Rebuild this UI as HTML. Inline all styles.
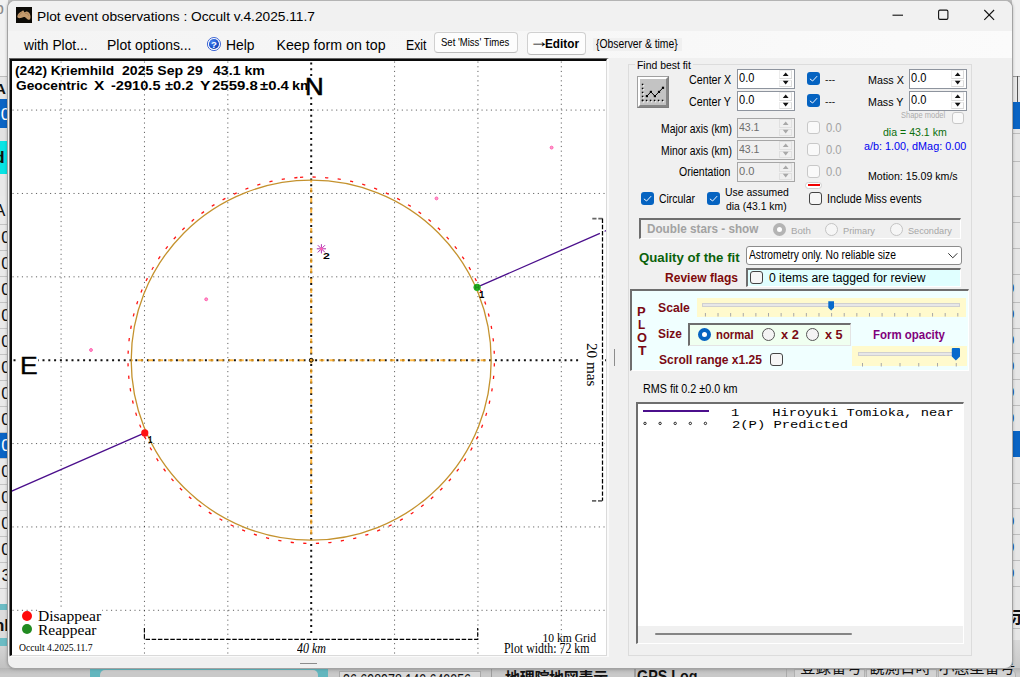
<!DOCTYPE html>
<html lang="en"><head><meta charset="utf-8"><title>Plot event observations : Occult v.4.2025.11.7</title>
<style>
html,body{margin:0;padding:0}
body{width:1020px;height:677px;overflow:hidden;position:relative;background:#c6c6c6;font-family:"Liberation Sans",sans-serif}
div,span,svg{position:absolute;box-sizing:border-box}
.t{white-space:pre;transform-origin:0 0;display:block}
.cb{width:13px;height:13px;border-radius:3px}
.cb.on{background:#0563c1}
.cb.off{background:#f6f6f6;border:1px solid #444}
.cb.dis{background:#f9f9f9;border:1px solid #c8c8c8}
.rb{width:13px;height:13px;border-radius:50%}
.rb.on{border:4px solid #0563c1;background:#fff}
.rb.off{border:1px solid #555;background:#f4f4f4}
.rb.dis{border:1px solid #c4c4c4;background:#f6f6f6}
.rb.dison{border:4px solid #b4b4b4;background:#fff}
.num{background:#fff;border:1px solid #8e949e}
.num.dis{background:#f0f0f0;border-color:#a6a6a6}
.sp{background:#fdfdfd;border:1px solid #dadada;border-top-color:#ececec;border-left-color:#ececec}
.num.dis .sp{background:#f0f0f0;border-color:#e0e0e0}
</style></head><body>

<div id="bgapp" style="left:0;top:0;width:1020px;height:677px;overflow:hidden">
<div style="left:0px;top:0px;width:8px;height:76px;background:#f1f1f1"></div>
<span class="t" style="left:-5.56px;top:-0.80px;font:normal normal 17px/19px 'Liberation Sans',sans-serif;color:#8a8a8a;">b</span>
<div style="left:0px;top:76px;width:8px;height:23px;background:#e6e6e6;border-top:1px solid #bdbdbd"></div>
<span class="t" style="left:-5.38px;top:79.80px;font:normal bold 15.5px/17px 'Liberation Sans',sans-serif;color:#111;">A</span>
<div style="left:0px;top:99px;width:8px;height:29px;background:#0a64c4"></div>
<span class="t" style="left:0.81px;top:105.00px;font:normal normal 17px/19px 'Liberation Sans',sans-serif;color:#fff;">0</span>
<div style="left:0px;top:128px;width:8px;height:13px;background:#e2e2e2"></div>
<div style="left:0px;top:141px;width:8px;height:33px;background:#08e4e4"></div>
<span class="t" style="left:-5.69px;top:148.00px;font:normal bold 17px/19px 'Liberation Sans',sans-serif;color:#111;">d</span>
<div style="left:0px;top:174px;width:8px;height:22px;background:#e8e8e8"></div>
<div style="left:0px;top:196px;width:8px;height:404px;background:#e9e9e9"></div>
<span class="t" style="left:-6.06px;top:201.00px;font:normal normal 17px/19px 'Liberation Sans',sans-serif;color:#111;">A</span>
<div style="left:0px;top:223.6px;width:8px;height:26.0px;border-top:1px solid #c3c3c3"></div>
<span class="t" style="left:1.31px;top:227.60px;font:normal normal 17px/19px 'Liberation Sans',sans-serif;color:#111;">0</span>
<div style="left:0px;top:249.60000000000002px;width:8px;height:26.0px;border-top:1px solid #c3c3c3"></div>
<span class="t" style="left:1.31px;top:253.60px;font:normal normal 17px/19px 'Liberation Sans',sans-serif;color:#111;">0</span>
<div style="left:0px;top:275.6px;width:8px;height:26.0px;border-top:1px solid #c3c3c3"></div>
<span class="t" style="left:1.31px;top:279.60px;font:normal normal 17px/19px 'Liberation Sans',sans-serif;color:#111;">0</span>
<div style="left:0px;top:301.6px;width:8px;height:26.0px;border-top:1px solid #c3c3c3"></div>
<span class="t" style="left:1.31px;top:305.60px;font:normal normal 17px/19px 'Liberation Sans',sans-serif;color:#111;">0</span>
<div style="left:0px;top:327.6px;width:8px;height:26.0px;border-top:1px solid #c3c3c3"></div>
<span class="t" style="left:1.31px;top:331.60px;font:normal normal 17px/19px 'Liberation Sans',sans-serif;color:#111;">0</span>
<div style="left:0px;top:353.6px;width:8px;height:26.0px;border-top:1px solid #c3c3c3"></div>
<span class="t" style="left:1.31px;top:357.60px;font:normal normal 17px/19px 'Liberation Sans',sans-serif;color:#111;">0</span>
<div style="left:0px;top:379.6px;width:8px;height:26.0px;border-top:1px solid #c3c3c3"></div>
<span class="t" style="left:1.31px;top:383.60px;font:normal normal 17px/19px 'Liberation Sans',sans-serif;color:#111;">0</span>
<div style="left:0px;top:405.6px;width:8px;height:26.0px;border-top:1px solid #c3c3c3"></div>
<span class="t" style="left:1.31px;top:409.60px;font:normal normal 17px/19px 'Liberation Sans',sans-serif;color:#111;">0</span>
<div style="left:0px;top:431.6px;width:8px;height:26.0px;background:#0a64c4;border-top:1px solid #c3c3c3"></div>
<span class="t" style="left:1.31px;top:435.60px;font:normal normal 17px/19px 'Liberation Sans',sans-serif;color:#fff;">0</span>
<div style="left:0px;top:457.6px;width:8px;height:26.0px;border-top:1px solid #c3c3c3"></div>
<span class="t" style="left:1.31px;top:461.60px;font:normal normal 17px/19px 'Liberation Sans',sans-serif;color:#111;">0</span>
<div style="left:0px;top:483.6px;width:8px;height:26.0px;border-top:1px solid #c3c3c3"></div>
<span class="t" style="left:1.31px;top:487.60px;font:normal normal 17px/19px 'Liberation Sans',sans-serif;color:#111;">0</span>
<div style="left:0px;top:509.6px;width:8px;height:26.0px;border-top:1px solid #c3c3c3"></div>
<span class="t" style="left:1.31px;top:513.60px;font:normal normal 17px/19px 'Liberation Sans',sans-serif;color:#111;">0</span>
<div style="left:0px;top:535.6px;width:8px;height:26.0px;border-top:1px solid #c3c3c3"></div>
<span class="t" style="left:1.31px;top:539.60px;font:normal normal 17px/19px 'Liberation Sans',sans-serif;color:#111;">0</span>
<div style="left:0px;top:561.6px;width:8px;height:26.0px;border-top:1px solid #c3c3c3"></div>
<span class="t" style="left:1.38px;top:565.60px;font:normal normal 17px/19px 'Liberation Sans',sans-serif;color:#111;">3</span>
<div style="left:0px;top:588px;width:8px;height:16px;background:#e9e9e9;border-top:1px solid #c3c3c3"></div>
<div style="left:0px;top:604px;width:8px;height:42px;background:#6cbcc4"></div>
<div style="left:0px;top:610px;width:8px;height:28px;background:#dcdcdc"></div>
<span class="t" style="left:-6.12px;top:616.00px;font:normal bold 17px/19px 'Liberation Sans',sans-serif;color:#111;">nl</span>
<div style="left:0px;top:646px;width:8px;height:31px;background:linear-gradient(#d4d4d4,#b9b9b9)"></div>
<div style="left:1012px;top:0px;width:8px;height:76px;background:#f1f1f1"></div>
<div style="left:1012px;top:76px;width:8px;height:26px;background:#e9e9e9;border-top:1px solid #9a9a9a"></div>
<div style="left:1017px;top:76px;width:1px;height:26px;background:#555"></div>
<div style="left:1012px;top:102px;width:8px;height:27px;background:#0a64c4"></div>
<div style="left:1012px;top:129px;width:8px;height:511px;background:#e6e6e6"></div>
<div style="left:1012px;top:133px;width:8px;height:1px;background:#bdbdbd"></div>
<div style="left:1012px;top:161px;width:8px;height:1px;background:#bdbdbd"></div>
<div style="left:1012px;top:196px;width:8px;height:1px;background:#bdbdbd"></div>
<div style="left:1012px;top:222px;width:8px;height:1px;background:#bdbdbd"></div>
<div style="left:1012px;top:248px;width:8px;height:1px;background:#bdbdbd"></div>
<div style="left:1012px;top:274px;width:8px;height:1px;background:#bdbdbd"></div>
<div style="left:1012px;top:302px;width:8px;height:1px;background:#bdbdbd"></div>
<div style="left:1012px;top:328px;width:8px;height:1px;background:#bdbdbd"></div>
<div style="left:1012px;top:353px;width:8px;height:1px;background:#bdbdbd"></div>
<div style="left:1012px;top:379px;width:8px;height:1px;background:#bdbdbd"></div>
<div style="left:1012px;top:405px;width:8px;height:1px;background:#bdbdbd"></div>
<div style="left:1012px;top:483px;width:8px;height:1px;background:#bdbdbd"></div>
<div style="left:1012px;top:508px;width:8px;height:1px;background:#bdbdbd"></div>
<div style="left:1012px;top:534px;width:8px;height:1px;background:#bdbdbd"></div>
<div style="left:1012px;top:560px;width:8px;height:1px;background:#bdbdbd"></div>
<div style="left:1012px;top:586px;width:8px;height:1px;background:#bdbdbd"></div>
<div style="left:1012px;top:628px;width:8px;height:1px;background:#bdbdbd"></div>
<div style="left:1012px;top:431px;width:8px;height:26px;background:#0a64c4"></div>
<span class="t" style="left:1005.94px;top:279.00px;font:normal normal 15px/17px 'Liberation Sans',sans-serif;color:#1747b0;">0</span>
<span class="t" style="left:1005.94px;top:305.00px;font:normal normal 15px/17px 'Liberation Sans',sans-serif;color:#1747b0;">0</span>
<span class="t" style="left:1005.94px;top:331.00px;font:normal normal 15px/17px 'Liberation Sans',sans-serif;color:#1747b0;">0</span>
<span class="t" style="left:1005.94px;top:357.00px;font:normal normal 15px/17px 'Liberation Sans',sans-serif;color:#1747b0;">0</span>
<span class="t" style="left:1005.94px;top:383.00px;font:normal normal 15px/17px 'Liberation Sans',sans-serif;color:#1747b0;">0</span>
<span class="t" style="left:1005.94px;top:409.00px;font:normal normal 15px/17px 'Liberation Sans',sans-serif;color:#1747b0;">0</span>
<span class="t" style="left:1005.94px;top:512.00px;font:normal normal 15px/17px 'Liberation Sans',sans-serif;color:#1747b0;">0</span>
<span class="t" style="left:1005.94px;top:538.00px;font:normal normal 15px/17px 'Liberation Sans',sans-serif;color:#1747b0;">0</span>
<span class="t" style="left:1005.94px;top:564.00px;font:normal normal 15px/17px 'Liberation Sans',sans-serif;color:#1747b0;">0</span>
<span class="t" style="left:1010.88px;top:608.50px;font:normal bold 16px/17px 'Liberation Sans',sans-serif;color:#111;font-family:'Liberation Sans','Noto Sans CJK JP',sans-serif;">示</span>
<div style="left:1012px;top:640px;width:8px;height:37px;background:linear-gradient(#d8d8d8,#c4c4c4)"></div>
<div style="left:0px;top:668px;width:1020px;height:9px;background:linear-gradient(#b4b4b4,#c9c9c9 70%)"></div>
<div style="left:90px;top:669px;width:238px;height:8px;background:#62b6be"></div>
<div style="left:100px;top:670px;width:218px;height:20px;background:#c9c9c9;border-radius:5px"></div>
<div style="left:339px;top:671px;width:142px;height:19px;background:#d9d9d9;border:1px solid #a8a8a8"></div>
<span class="t" style="left:342.53px;top:670.60px;font:normal normal 16.5px/18px 'Liberation Sans',sans-serif;color:#111;transform:scaleX(0.7543);">36.698978,140.640056</span>
<div style="left:491px;top:669px;width:1px;height:8px;background:#9c9c9c"></div>
<span class="t" style="left:505px;top:668.5px;font:bold 15px/18px sans-serif;font-family:'Liberation Sans','Noto Sans CJK JP',sans-serif;color:#111;letter-spacing:-.3px">地理院地図表示</span>
<div style="left:634px;top:669px;width:2px;height:8px;background:#9c9c9c"></div>
<span class="t" style="left:637.42px;top:667.30px;font:normal bold 17px/19px 'Liberation Sans',sans-serif;color:#111;transform:scaleX(0.8436);">GPS Log</span>
<div style="left:786px;top:669px;width:1px;height:8px;background:#aaa"></div>
<div style="left:794px;top:669px;width:71px;height:21px;background:#d2d2d2;border:1px solid #b0b0b0"></div>
<div style="left:866px;top:669px;width:71px;height:21px;background:#d2d2d2;border:1px solid #b0b0b0"></div>
<div style="left:938px;top:669px;width:78px;height:21px;background:#d2d2d2;border:1px solid #b0b0b0;border-radius:0 6px 0 0"></div>
<span class="t" style="left:800px;top:658.5px;font:normal 15.5px/18px sans-serif;font-family:'Liberation Sans','Noto Sans CJK JP',sans-serif;color:#111">登録番号</span>
<span class="t" style="left:869px;top:658.5px;font:normal 15.5px/18px sans-serif;font-family:'Liberation Sans','Noto Sans CJK JP',sans-serif;color:#111">観測日時</span>
<span class="t" style="left:939px;top:658.5px;font:normal 15.5px/18px sans-serif;font-family:'Liberation Sans','Noto Sans CJK JP',sans-serif;color:#111;letter-spacing:-.4px">小惑星番号</span>
</div>
<div style="left:7px;top:0px;width:1006px;height:669px;background:#f0f0f0;border:1px solid #a3a3a3;border-top-color:#b4b4b4;border-radius:8px;box-shadow:0 0 3px rgba(0,0,0,.25)"></div>
<div style="left:8px;top:1px;width:1004px;height:29.5px;background:#f1f1f1;border-radius:7px 7px 0 0"></div>
<svg style="left:16px;top:7px" width="16" height="16" viewBox="0 0 16 16"><rect width="16" height="16" fill="#0c0a06"/><path d="M1.3 9.6C1.6 7 3.4 5.4 5 4.8c.9-.4 1.4-1.6 2.2-1.4.8.2.5 1.3 1.2 1.8.8.5 1.5-.7 2.6-.6 1.6.2 2.9 1.7 3.3 3.6.4 1.8.3 3.6-.6 4.3-.9.6-2.100-.3-3.200-1.100-1-.8-1.600-1.400-2.600-1.300-1.200.1-1.800.9-3 1-1.500.2-3.700.2-3.600-1.500z" fill="#c49a6c"/><path d="M3 9c.6-2 2-3 3.400-3.600M9 6.500c1.500-.5 3.200.2 3.800 2.300" stroke="#a67c4f" stroke-width=".8" fill="none"/></svg>
<span class="t" style="left:36.66px;top:8.60px;font:normal normal 13.52px/15px 'Liberation Sans',sans-serif;color:#000;transform:scaleX(1.0153);">Plot event observations : Occult v.4.2025.11.7</span>
<svg style="left:880px;top:1px" width="130" height="29" viewBox="880 1 130 29" fill="none" stroke="#111" stroke-width="1.1"><path d="M892.500 15.200h10.500"/><rect x="938.600" y="10.100" width="9.300" height="9.300" rx="1.300"/><path d="M984.300 10l9.800 9.800M994.100 10l-9.800 9.800"/></svg>
<div style="left:8px;top:30.5px;width:1004px;height:27.0px;background:linear-gradient(90deg,#f4f4f4,#f6f6f6 45%,#fbfbfb)"></div>
<span class="t" style="left:24.30px;top:37.00px;font:normal normal 14.24px/16px 'Liberation Sans',sans-serif;color:#000;transform:scaleX(0.9699);">with Plot...</span>
<span class="t" style="left:107.44px;top:37.00px;font:normal normal 14.24px/16px 'Liberation Sans',sans-serif;color:#000;transform:scaleX(0.9796);">Plot options...</span>
<svg style="left:206px;top:36px" width="16" height="16" viewBox="0 0 16 16"><defs><radialGradient id="hg" cx=".35" cy=".3" r=".85"><stop offset="0" stop-color="#4d86f0"/><stop offset=".55" stop-color="#1c55d0"/><stop offset="1" stop-color="#0f3aa6"/></radialGradient></defs><circle cx="7.950" cy="8.050" r="6.550" fill="#fff" stroke="#3f66d4" stroke-width="1"/><circle cx="7.950" cy="8.050" r="5.050" fill="url(#hg)"/><text x="8" y="11.500" font-family="Liberation Sans,sans-serif" font-weight="bold" font-size="9.500" fill="#fff" text-anchor="middle">?</text></svg>
<span class="t" style="left:225.74px;top:37.00px;font:normal normal 14.24px/16px 'Liberation Sans',sans-serif;color:#000;transform:scaleX(0.9745);">Help</span>
<span class="t" style="left:276.42px;top:37.00px;font:normal normal 14.24px/16px 'Liberation Sans',sans-serif;color:#000;">Keep form on top</span>
<span class="t" style="left:405.77px;top:37.00px;font:normal normal 14.24px/16px 'Liberation Sans',sans-serif;color:#000;transform:scaleX(0.8646);">Exit</span>
<div style="left:434.2px;top:32.4px;width:83.4px;height:20.3px;background:#fdfdfd;border:1px solid #d0d0d0;border-bottom-color:#bcbcbc;border-radius:4px"></div>
<span class="t" style="left:440.78px;top:37.20px;font:normal normal 10.03px/11px 'Liberation Sans',sans-serif;color:#000;transform:scaleX(0.9521);">Set 'Miss' Times</span>
<div style="left:527.3px;top:32.1px;width:58.3px;height:22.5px;background:#fdfdfd;border:1px solid #d0d0d0;border-bottom-color:#bcbcbc;border-radius:4px"></div>
<span class="t" style="left:529.14px;top:31.40px;font:normal bold 18px/20px 'Liberation Sans',sans-serif;color:#000;transform:scaleX(1.1012);">→</span>
<span class="t" style="left:545.12px;top:36.70px;font:normal bold 12.35px/14px 'Liberation Sans',sans-serif;color:#000;transform:scaleX(0.9542);">Editor</span>
<div style="left:593.1px;top:38.1px;width:88.8px;height:12.5px;background:#f0f0f0"></div>
<span class="t" style="left:596.14px;top:37.20px;font:normal normal 12.35px/14px 'Liberation Sans',sans-serif;color:#000;transform:scaleX(0.8386);">{Observer &amp; time}</span>
<div style="left:9px;top:58px;width:600px;height:599px;background:#fff;border-left:1px solid #777;border-top:1px solid #666;border-right:2px solid #fafafa;border-bottom:2px solid #fafafa"></div>
<div style="left:10px;top:59px;width:597px;height:597px;background:#fff;border-left:2px solid #0a0a0a;border-top:2px solid #0a0a0a;border-right:1px solid #dadada;border-bottom:1px solid #dadada"></div>
<svg style="left:12px;top:61px" width="594" height="594" viewBox="12 61 594 594"><path d="M61.09 61.5V655M12.5 110.09H606M144.46 61.5V655M12.5 193.46H606M227.83 61.5V655M12.5 276.83H606M394.57 61.5V655M12.5 443.57H606M477.94 61.5V655M12.5 526.94H606M561.31 61.5V655M12.5 610.31H606" stroke="#000" stroke-opacity=".62" stroke-width="1" stroke-dasharray="1.15 3.54" fill="none"/><path d="M13.5 360.2H606" stroke="#111" stroke-width="2" stroke-dasharray="2 3.8" fill="none"/><path d="M311.2 62.5V633.5" stroke="#111" stroke-width="2" stroke-dasharray="2 3.8" fill="none"/><path d="M131.60 360.2H491.20" stroke="#ffa818" stroke-opacity=".8" stroke-width="2" stroke-dasharray="5 5.08" stroke-dashoffset="3.74" fill="none"/><path d="M311.2 180.60V540.20" stroke="#ffa818" stroke-opacity=".8" stroke-width="2" stroke-dasharray="4.8 5.25" stroke-dashoffset="2.85" fill="none"/><circle cx="311.2" cy="360.2" r="1.9" fill="#f0a020" stroke="#111" stroke-width="1"/><circle cx="311.2" cy="360.2" r="183.2" fill="none" stroke="#ff1414" stroke-width="1.3" stroke-dasharray="3.2 9.38" transform="rotate(-93.5 311.2 360.2)"/><circle cx="311.2" cy="360.2" r="180.0" fill="none" stroke="#c4922e" stroke-width="1.3"/><path d="M10 491.900L144.800 432.900M477.100 287.200L599.900 233.300M604.400 231.300L606.500 230.400" stroke="#4b0f8c" stroke-width="1.3" fill="none"/><circle cx="144.800" cy="432.900" r="3.600" fill="#ff1212"/><circle cx="477.100" cy="287.300" r="3.600" fill="#1fb31f"/><path d="M475.500 285v4.600M478.700 285v4.600M475.500 287.300h3.200" stroke="#1f8a1f" stroke-width="1.200" fill="none"/><circle cx="551.6" cy="147.6" r="1.45" fill="#ff9acb" stroke="#ff58aa" stroke-width=".9"/><circle cx="436.5" cy="198.4" r="1.45" fill="#ff9acb" stroke="#ff58aa" stroke-width=".9"/><circle cx="206.2" cy="299.3" r="1.45" fill="#ff9acb" stroke="#ff58aa" stroke-width=".9"/><circle cx="91" cy="350" r="1.45" fill="#ff9acb" stroke="#ff58aa" stroke-width=".9"/><path d="M316.79999999999995 248.8h9.2M321.4 244.20000000000002v9.2M317.79999999999995 245.20000000000002l7.2 7.2M317.79999999999995 252.4l7.2 -7.2" stroke="#b030b0" stroke-width="1" fill="none"/><circle cx="321.4" cy="248.8" r="1.6" fill="#ff5fb4"/><rect x="600.200" y="217" width="4.200" height="285" fill="#fff"/><rect x="579.500" y="341" width="21" height="48" fill="#fff"/><path d="M602.500 218.600V500.800" stroke="#000" stroke-width="1.25" stroke-dasharray="4.4 1.8" fill="none"/><path d="M592.300 218.600H602.500M592 500.800H602.500" stroke="#000" stroke-opacity=".6" stroke-width="1.7" stroke-dasharray="4.2 1.8" fill="none"/><path d="M144.400 628V639.300H477.700V628" stroke="#000" stroke-width="1.15" stroke-dasharray="4.5 1.7" fill="none"/></svg>
<div style="left:306.5px;top:77px;width:16.0px;height:19px;background:#fff"></div>
<span class="t" style="left:15.30px;top:62.90px;font:normal bold 13.44px/15px 'Liberation Sans',sans-serif;color:#000;transform:scaleX(1.0209);">(242) Kriemhild</span>
<span class="t" style="left:121.74px;top:62.90px;font:normal bold 13.44px/15px 'Liberation Sans',sans-serif;color:#000;transform:scaleX(1.0491);">2025 Sep 29</span>
<span class="t" style="left:213.30px;top:62.90px;font:normal bold 13.44px/15px 'Liberation Sans',sans-serif;color:#000;transform:scaleX(1.0515);">43.1 km</span>
<span class="t" style="left:15.73px;top:78.40px;font:normal bold 13.44px/15px 'Liberation Sans',sans-serif;color:#000;transform:scaleX(1.0195);">Geocentric</span>
<span class="t" style="left:93.86px;top:78.40px;font:normal bold 13.44px/15px 'Liberation Sans',sans-serif;color:#000;transform:scaleX(1.1511);">X</span>
<span class="t" style="left:110.66px;top:78.40px;font:normal bold 13.44px/15px 'Liberation Sans',sans-serif;color:#000;transform:scaleX(1.0860);">-2910.5</span>
<span class="t" style="left:164.66px;top:78.40px;font:normal bold 13.44px/15px 'Liberation Sans',sans-serif;color:#000;transform:scaleX(1.0878);">±0.2</span>
<span class="t" style="left:199.61px;top:78.40px;font:normal bold 13.44px/15px 'Liberation Sans',sans-serif;color:#000;transform:scaleX(1.1647);">Y</span>
<span class="t" style="left:212.11px;top:78.40px;font:normal bold 13.44px/15px 'Liberation Sans',sans-serif;color:#000;transform:scaleX(1.1130);">2559.8</span>
<span class="t" style="left:260.45px;top:78.40px;font:normal bold 13.44px/15px 'Liberation Sans',sans-serif;color:#000;transform:scaleX(1.1056);">±0.4</span>
<span class="t" style="left:291.89px;top:78.40px;font:normal bold 13.44px/15px 'Liberation Sans',sans-serif;color:#000;transform:scaleX(1.0742);">km</span>
<div style="left:307px;top:77px;width:16px;height:19px;background:#fff"></div>
<span class="t" style="left:305.46px;top:72.90px;font:normal normal 24.13px/27px 'Liberation Sans',sans-serif;color:#000;transform:scaleX(1.0716);-webkit-text-stroke:.6px #000;">N</span>
<div style="left:17.5px;top:355px;width:20.5px;height:21px;background:#fff"></div>
<span class="t" style="left:19.56px;top:352.00px;font:normal normal 24.71px/27px 'Liberation Sans',sans-serif;color:#000;transform:scaleX(1.0716);-webkit-text-stroke:.4px #000;">E</span>
<span class="t" style="left:322.61px;top:250.00px;font:normal bold 9.88px/11px 'Liberation Sans',sans-serif;color:#000;transform:scaleX(1.2468);">2</span>
<span class="t" style="left:479.00px;top:288.70px;font:normal bold 10.5px/12px 'Liberation Mono',monospace;color:#000;transform:scaleX(0.8675);">1</span>
<span class="t" style="left:147.81px;top:433.90px;font:normal bold 10.5px/12px 'Liberation Mono',monospace;color:#000;transform:scaleX(0.7133);">1</span>
<div style="left:36.8px;top:609px;width:65.2px;height:44.5px;background:#fff"></div>
<div style="left:17px;top:641px;width:77px;height:12.5px;background:#fff"></div>
<div style="left:21.600px;top:610.500px;width:10.200px;height:10.200px;border-radius:50%;background:#ff0a0a"></div>
<div style="left:21.600px;top:624.300px;width:10.200px;height:10.200px;border-radius:50%;background:#228b22"></div>
<span class="t" style="left:37.94px;top:607.60px;font:normal normal 14.66px/16px 'Liberation Serif',serif;color:#000;transform:scaleX(1.0616);">Disappear</span>
<span class="t" style="left:37.94px;top:621.70px;font:normal normal 14.66px/16px 'Liberation Serif',serif;color:#000;transform:scaleX(1.0557);">Reappear</span>
<span class="t" style="left:18.81px;top:640.80px;font:normal normal 10.69px/12px 'Liberation Serif',serif;color:#000;transform:scaleX(0.9021);">Occult 4.2025.11.7</span>
<span class="t" style="left:542.50px;top:631.80px;font:normal normal 11.6px/13px 'Liberation Serif',serif;color:#000;">10 km Grid</span>
<span class="t" style="left:503.68px;top:640.70px;font:normal normal 13.74px/15px 'Liberation Serif',serif;color:#000;transform:scaleX(0.8656);">Plot width: 72 km</span>
<span class="t" style="left:297.35px;top:640.80px;font:italic normal 13.74px/15px 'Liberation Serif',serif;color:#000;transform:scaleX(0.8722);">40 km</span>
<span class="t" style="left:600.70px;top:343.22px;font:normal normal 15.3px/17px 'Liberation Serif',serif;color:#000;transform:rotate(90deg) scaleX(0.9938)">20 mas</span>
<div style="left:614px;top:348.7px;width:1px;height:17.3px;background:#8c8c8c"></div>
<div style="left:300px;top:663px;width:17px;height:1px;background:#8c8c8c"></div>
<div style="left:628px;top:64px;width:344px;height:592px;border:1px solid #dcdcdc"></div>
<div style="left:635px;top:60px;width:57.5px;height:10px;background:#f0f0f0"></div>
<span class="t" style="left:636.67px;top:57.70px;font:normal normal 11.77px/13px 'Liberation Sans',sans-serif;color:#000;transform:scaleX(0.8844);">Find best fit</span>
<div style="left:637px;top:76px;width:32px;height:32px;background:#c3c3c3;border:1px solid #a0a0a0;border-right-color:#7e7e7e;border-bottom-color:#7e7e7e"></div>
<div style="left:638px;top:77px;width:30px;height:30px;border-top:2px solid #fff;border-left:2px solid #fff;border-right:2px solid #868686;border-bottom:2px solid #868686"></div>
<svg style="left:637px;top:76px" width="32" height="32" viewBox="637 76 32 32"><g fill="#fff"><rect x="642.8" y="84.9" width="1.400" height="1.400"/><rect x="642.8" y="88.9" width="1.400" height="1.400"/><rect x="642.8" y="92.9" width="1.400" height="1.400"/><rect x="642.8" y="96.9" width="1.400" height="1.400"/><rect x="642.8" y="100.9" width="1.400" height="1.400"/><rect x="642.8" y="100.9" width="1.400" height="1.400"/><rect x="646.8" y="100.9" width="1.400" height="1.400"/><rect x="650.8" y="100.9" width="1.400" height="1.400"/><rect x="654.8" y="100.9" width="1.400" height="1.400"/><rect x="658.8" y="100.9" width="1.400" height="1.400"/><rect x="662.8" y="100.9" width="1.400" height="1.400"/></g><g fill="#000"><rect x="641.8" y="83.7" width="1.500" height="1.500"/><rect x="641.8" y="87.7" width="1.500" height="1.500"/><rect x="641.8" y="91.7" width="1.500" height="1.500"/><rect x="641.8" y="95.7" width="1.500" height="1.500"/><rect x="641.8" y="99.7" width="1.500" height="1.500"/><rect x="641.8" y="99.7" width="1.500" height="1.500"/><rect x="645.8" y="99.7" width="1.500" height="1.500"/><rect x="649.8" y="99.7" width="1.500" height="1.500"/><rect x="653.8" y="99.7" width="1.500" height="1.500"/><rect x="657.8" y="99.7" width="1.500" height="1.500"/><rect x="661.8" y="99.7" width="1.500" height="1.500"/></g><path d="M646.900 96.100L650.900 91.900L654.900 96.100L659 91.900L663 87.800" stroke="#000" stroke-width="1" fill="none"/><g fill="#000"><rect x="645.800" y="95" width="2.200" height="2.200"/><rect x="649.800" y="90.800" width="2.200" height="2.200"/><rect x="653.800" y="95" width="2.200" height="2.200"/><rect x="657.900" y="90.800" width="2.200" height="2.200"/><rect x="661.900" y="86.700" width="2.200" height="2.200"/></g></svg>
<span class="t" style="left:688.94px;top:72.80px;font:normal normal 12.06px/14px 'Liberation Sans',sans-serif;color:#000;transform:scaleX(0.8889);">Center X</span>
<span class="t" style="left:688.95px;top:94.60px;font:normal normal 12.06px/14px 'Liberation Sans',sans-serif;color:#000;transform:scaleX(0.8851);">Center Y</span>
<div class="num" style="left:737px;top:69px;width:58px;height:20px"><div class="sp" style="left:41px;top:.4px;width:13.400px;height:8.200px"></div><div class="sp" style="left:41px;top:9.500px;width:13.400px;height:7.600px"></div><svg style="left:41px;top:-1px" width="15" height="19" viewBox="0 0 15 19"><path d="M3.800 7.100L6.700 3.600L9.600 7.100zM3.800 11.800L6.700 15.500L9.600 11.800z" fill="#111"/></svg></div>
<span class="t" style="left:738.86px;top:70.90px;font:normal normal 12.5px/14px 'Liberation Sans',sans-serif;color:#000;transform:scaleX(0.8821);">0.0</span>
<div class="num" style="left:737px;top:91px;width:58px;height:20px"><div class="sp" style="left:41px;top:.4px;width:13.400px;height:8.200px"></div><div class="sp" style="left:41px;top:9.500px;width:13.400px;height:7.600px"></div><svg style="left:41px;top:-1px" width="15" height="19" viewBox="0 0 15 19"><path d="M3.800 7.100L6.700 3.600L9.600 7.100zM3.800 11.800L6.700 15.500L9.600 11.800z" fill="#111"/></svg></div>
<span class="t" style="left:738.86px;top:92.90px;font:normal normal 12.5px/14px 'Liberation Sans',sans-serif;color:#000;transform:scaleX(0.8821);">0.0</span>
<span class="t" style="left:867.64px;top:73.00px;font:normal normal 11.77px/13px 'Liberation Sans',sans-serif;color:#000;transform:scaleX(0.9132);">Mass X</span>
<span class="t" style="left:867.65px;top:94.60px;font:normal normal 11.77px/13px 'Liberation Sans',sans-serif;color:#000;transform:scaleX(0.9071);">Mass Y</span>
<div class="num" style="left:909px;top:69px;width:58px;height:20px"><div class="sp" style="left:41px;top:.4px;width:13.400px;height:8.200px"></div><div class="sp" style="left:41px;top:9.500px;width:13.400px;height:7.600px"></div><svg style="left:41px;top:-1px" width="15" height="19" viewBox="0 0 15 19"><path d="M3.800 7.100L6.700 3.600L9.600 7.100zM3.800 11.800L6.700 15.500L9.600 11.800z" fill="#111"/></svg></div>
<span class="t" style="left:910.86px;top:70.90px;font:normal normal 12.5px/14px 'Liberation Sans',sans-serif;color:#000;transform:scaleX(0.8821);">0.0</span>
<div class="num" style="left:909px;top:91px;width:58px;height:20px"><div class="sp" style="left:41px;top:.4px;width:13.400px;height:8.200px"></div><div class="sp" style="left:41px;top:9.500px;width:13.400px;height:7.600px"></div><svg style="left:41px;top:-1px" width="15" height="19" viewBox="0 0 15 19"><path d="M3.800 7.100L6.700 3.600L9.600 7.100zM3.800 11.800L6.700 15.500L9.600 11.800z" fill="#111"/></svg></div>
<span class="t" style="left:910.86px;top:92.90px;font:normal normal 12.5px/14px 'Liberation Sans',sans-serif;color:#000;transform:scaleX(0.8821);">0.0</span>
<span class="t" style="left:660.64px;top:121.60px;font:normal normal 12.06px/14px 'Liberation Sans',sans-serif;color:#000;transform:scaleX(0.8608);">Major axis (km)</span>
<span class="t" style="left:660.64px;top:143.80px;font:normal normal 12.06px/14px 'Liberation Sans',sans-serif;color:#000;transform:scaleX(0.8608);">Minor axis (km)</span>
<span class="t" style="left:679.33px;top:164.80px;font:normal normal 12.5px/14px 'Liberation Sans',sans-serif;color:#000;transform:scaleX(0.8402);">Orientation</span>
<div class="num dis" style="left:737px;top:118px;width:58px;height:20px"><div class="sp" style="left:41px;top:.4px;width:13.400px;height:8.200px"></div><div class="sp" style="left:41px;top:9.500px;width:13.400px;height:7.600px"></div><svg style="left:41px;top:-1px" width="15" height="19" viewBox="0 0 15 19"><path d="M3.800 7.100L6.700 3.600L9.600 7.100zM3.800 11.800L6.700 15.500L9.600 11.800z" fill="#a8a8a8"/></svg></div>
<span class="t" style="left:738.97px;top:120.70px;font:normal normal 11.48px/12px 'Liberation Sans',sans-serif;color:#6d6d6d;transform:scaleX(0.9163);">43.1</span>
<div class="num dis" style="left:737px;top:140px;width:58px;height:20px"><div class="sp" style="left:41px;top:.4px;width:13.400px;height:8.200px"></div><div class="sp" style="left:41px;top:9.500px;width:13.400px;height:7.600px"></div><svg style="left:41px;top:-1px" width="15" height="19" viewBox="0 0 15 19"><path d="M3.800 7.100L6.700 3.600L9.600 7.100zM3.800 11.800L6.700 15.500L9.600 11.800z" fill="#a8a8a8"/></svg></div>
<span class="t" style="left:738.97px;top:142.70px;font:normal normal 11.48px/12px 'Liberation Sans',sans-serif;color:#6d6d6d;transform:scaleX(0.9163);">43.1</span>
<div class="num dis" style="left:737px;top:162px;width:58px;height:20px"><div class="sp" style="left:41px;top:.4px;width:13.400px;height:8.200px"></div><div class="sp" style="left:41px;top:9.500px;width:13.400px;height:7.600px"></div><svg style="left:41px;top:-1px" width="15" height="19" viewBox="0 0 15 19"><path d="M3.800 7.100L6.700 3.600L9.600 7.100zM3.800 11.800L6.700 15.500L9.600 11.800z" fill="#a8a8a8"/></svg></div>
<span class="t" style="left:738.78px;top:164.70px;font:normal normal 11.48px/12px 'Liberation Sans',sans-serif;color:#6d6d6d;transform:scaleX(0.9693);">0.0</span>
<div class="cb on" style="left:807px;top:72px;width:13px;height:13px"><svg width="13" height="13" viewBox="0 0 13 13" style="left:0;top:0"><path d="M3.200 7.100L5.600 9L9.900 4.400" stroke="#f4f8ff" stroke-width="1" fill="none" stroke-linecap="round" stroke-linejoin="round"/></svg></div>
<div class="cb on" style="left:807px;top:94px;width:13px;height:13px"><svg width="13" height="13" viewBox="0 0 13 13" style="left:0;top:0"><path d="M3.200 7.100L5.600 9L9.900 4.400" stroke="#f4f8ff" stroke-width="1" fill="none" stroke-linecap="round" stroke-linejoin="round"/></svg></div>
<span class="t" style="left:825.36px;top:72.60px;font:normal normal 11.5px/12px 'Liberation Sans',sans-serif;color:#222;transform:scaleX(0.8857);">---</span>
<span class="t" style="left:825.36px;top:94.60px;font:normal normal 11.5px/12px 'Liberation Sans',sans-serif;color:#222;transform:scaleX(0.8857);">---</span>
<div class="cb dis" style="left:807px;top:121.4px;width:13px;height:13px"></div>
<div class="cb dis" style="left:807px;top:143.3px;width:13px;height:13px"></div>
<div class="cb dis" style="left:807px;top:165.2px;width:13px;height:13px"></div>
<span class="t" style="left:825.75px;top:121.00px;font:normal normal 12.35px/14px 'Liberation Sans',sans-serif;color:#a3a3a3;transform:scaleX(0.9081);">0.0</span>
<span class="t" style="left:825.75px;top:143.00px;font:normal normal 12.35px/14px 'Liberation Sans',sans-serif;color:#a3a3a3;transform:scaleX(0.9081);">0.0</span>
<span class="t" style="left:825.75px;top:165.00px;font:normal normal 12.35px/14px 'Liberation Sans',sans-serif;color:#a3a3a3;transform:scaleX(0.9081);">0.0</span>
<span class="t" style="left:901.06px;top:110.80px;font:normal normal 8.28px/10px 'Liberation Sans',sans-serif;color:#adadad;transform:scaleX(0.9065);">Shape model</span>
<div class="cb dis" style="left:952.4px;top:111.8px;width:12px;height:12px"></div>
<span class="t" style="left:882.76px;top:125.70px;font:normal normal 10.61px/12px 'Liberation Sans',sans-serif;color:#0b6e0b;transform:scaleX(0.9956);">dia = 43.1 km</span>
<span class="t" style="left:863.87px;top:139.70px;font:normal normal 10.9px/12px 'Liberation Sans',sans-serif;color:#0000f0;transform:scaleX(0.9929);">a/b: 1.00, dMag: 0.00</span>
<span class="t" style="left:867.74px;top:169.70px;font:normal normal 10.76px/12px 'Liberation Sans',sans-serif;color:#000;transform:scaleX(0.9874);">Motion: 15.09 km/s</span>
<div style="left:804.7px;top:181.6px;width:17.7px;height:7.0px;background:#fff;border:1px solid #cfcfcf;border-radius:3.500px"></div>
<div style="left:807.5px;top:184.2px;width:12.3px;height:2.0px;background:#f00000"></div>
<div class="cb on" style="left:641px;top:192px;width:13px;height:13px"><svg width="13" height="13" viewBox="0 0 13 13" style="left:0;top:0"><path d="M3.200 7.100L5.600 9L9.900 4.400" stroke="#f4f8ff" stroke-width="1" fill="none" stroke-linecap="round" stroke-linejoin="round"/></svg></div>
<span class="t" style="left:658.97px;top:191.70px;font:normal normal 12.35px/14px 'Liberation Sans',sans-serif;color:#000;transform:scaleX(0.8455);">Circular</span>
<div class="cb on" style="left:707px;top:192px;width:13px;height:13px"><svg width="13" height="13" viewBox="0 0 13 13" style="left:0;top:0"><path d="M3.200 7.100L5.600 9L9.900 4.400" stroke="#f4f8ff" stroke-width="1" fill="none" stroke-linecap="round" stroke-linejoin="round"/></svg></div>
<span class="t" style="left:725.39px;top:186.40px;font:normal normal 11.34px/12px 'Liberation Sans',sans-serif;color:#000;transform:scaleX(0.9204);">Use assumed</span>
<span class="t" style="left:725.80px;top:199.50px;font:normal normal 11.34px/12px 'Liberation Sans',sans-serif;color:#000;transform:scaleX(0.9169);">dia (43.1 km)</span>
<div class="cb off" style="left:809px;top:192px;width:13px;height:13px"></div>
<span class="t" style="left:827.22px;top:191.70px;font:normal normal 12.35px/14px 'Liberation Sans',sans-serif;color:#000;transform:scaleX(0.8720);">Include Miss events</span>
<div style="left:639px;top:218px;width:322px;height:21px;border-top:2px solid #6e6e6e;border-left:2px solid #6e6e6e;border-right:1px solid #fff;border-bottom:1px solid #fff;background:#f0f0f0"></div>
<span class="t" style="left:647.02px;top:222.00px;font:normal bold 12.21px/14px 'Liberation Sans',sans-serif;color:#a2a2a2;transform:scaleX(0.9602);">Double stars - show</span>
<div class="rb dison" style="left:773px;top:223px;width:13px;height:13px"></div>
<span class="t" style="left:790.50px;top:225.20px;font:normal normal 9.88px/11px 'Liberation Sans',sans-serif;color:#a6a6a6;transform:scaleX(0.9801);">Both</span>
<div class="rb dis" style="left:825px;top:223px;width:13px;height:13px"></div>
<span class="t" style="left:842.54px;top:225.20px;font:normal normal 9.88px/11px 'Liberation Sans',sans-serif;color:#a6a6a6;transform:scaleX(0.9401);">Primary</span>
<div class="rb dis" style="left:890px;top:223px;width:13px;height:13px"></div>
<span class="t" style="left:907.79px;top:225.20px;font:normal normal 9.88px/11px 'Liberation Sans',sans-serif;color:#a6a6a6;transform:scaleX(0.9271);">Secondary</span>
<span class="t" style="left:638.98px;top:249.60px;font:normal bold 12.79px/15px 'Liberation Sans',sans-serif;color:#0b610b;transform:scaleX(1.0343);">Quality of the fit</span>
<div style="left:745.5px;top:245.8px;width:216.5px;height:19.6px;background:#fff;border:1px solid #8c8c8c;border-radius:3px"></div>
<span class="t" style="left:748.70px;top:247.90px;font:normal normal 12.06px/14px 'Liberation Sans',sans-serif;color:#000;transform:scaleX(0.8554);">Astrometry only. No reliable size</span>
<svg style="left:947px;top:251px" width="12" height="9" viewBox="0 0 12 9"><path d="M1.300 2.300L5.800 6.800L10.300 2.300" stroke="#333" stroke-width="1" fill="none"/></svg>
<span class="t" style="left:665.00px;top:270.60px;font:normal bold 12.21px/14px 'Liberation Sans',sans-serif;color:#7e0a0a;transform:scaleX(0.9878);">Review flags</span>
<div style="left:745.5px;top:268px;width:215.5px;height:19.2px;background:#e0ffff;border-top:2px solid #6e6e6e;border-left:2px solid #6e6e6e;border-right:1px solid #fff;border-bottom:1px solid #fff"></div>
<div class="cb off" style="left:750px;top:271.2px;width:12.6px;height:12.6px"></div>
<span class="t" style="left:769.10px;top:270.50px;font:normal normal 12.21px/14px 'Liberation Sans',sans-serif;color:#000;transform:scaleX(0.9947);">0 items are tagged for review</span>
<div style="left:630px;top:289px;width:339px;height:81.5px;background:#f0ffff;border-top:2px solid #6e6e6e;border-left:2px solid #6e6e6e;border-right:1px solid #fff;border-bottom:1px solid #fff"></div>
<span class="t" style="left:637.46px;top:304.90px;font:normal bold 12.5px/14px 'Liberation Sans',sans-serif;color:#7a0a14;transform:scaleX(1.0386);">P</span>
<span class="t" style="left:637.73px;top:317.90px;font:normal bold 12.5px/14px 'Liberation Sans',sans-serif;color:#7a0a14;transform:scaleX(0.9476);">L</span>
<span class="t" style="left:637.09px;top:331.20px;font:normal bold 12.5px/14px 'Liberation Sans',sans-serif;color:#7a0a14;transform:scaleX(1.0245);">O</span>
<span class="t" style="left:637.66px;top:343.80px;font:normal bold 12.5px/14px 'Liberation Sans',sans-serif;color:#7a0a14;transform:scaleX(1.1119);">T</span>
<span class="t" style="left:658.14px;top:300.00px;font:normal bold 12.79px/15px 'Liberation Sans',sans-serif;color:#7a0a14;transform:scaleX(0.9533);">Scale</span>
<div style="left:697px;top:298.3px;width:269px;height:18.6px;background:#fffacd"></div>
<div style="left:702px;top:303.2px;width:257.7px;height:3.6px;background:#e7e7e7;border:1px solid #d0d0d0"></div>
<svg style="left:697px;top:298px" width="269" height="19" viewBox="697 298 269 19"><g fill="#a8a8a8"><rect x="704.90" y="313" width="1" height="3.500"/><rect x="717.52" y="313" width="1" height="3.500"/><rect x="730.14" y="313" width="1" height="3.500"/><rect x="742.76" y="313" width="1" height="3.500"/><rect x="755.38" y="313" width="1" height="3.500"/><rect x="768.00" y="313" width="1" height="3.500"/><rect x="780.62" y="313" width="1" height="3.500"/><rect x="793.24" y="313" width="1" height="3.500"/><rect x="805.86" y="313" width="1" height="3.500"/><rect x="818.48" y="313" width="1" height="3.500"/><rect x="831.10" y="313" width="1" height="3.500"/><rect x="843.72" y="313" width="1" height="3.500"/><rect x="856.34" y="313" width="1" height="3.500"/><rect x="868.96" y="313" width="1" height="3.500"/><rect x="881.58" y="313" width="1" height="3.500"/><rect x="894.20" y="313" width="1" height="3.500"/><rect x="906.82" y="313" width="1" height="3.500"/><rect x="919.44" y="313" width="1" height="3.500"/><rect x="932.06" y="313" width="1" height="3.500"/><rect x="944.68" y="313" width="1" height="3.500"/><rect x="957.30" y="313" width="1" height="3.500"/></g><path d="M828.300 301.300h5.700v6.400l-2.850 2.900l-2.850 -2.900z" fill="#0669cc"/></svg>
<span class="t" style="left:658.14px;top:326.70px;font:normal bold 12.35px/14px 'Liberation Sans',sans-serif;color:#7a0a14;transform:scaleX(0.9634);">Size</span>
<div style="left:688px;top:323.2px;width:163px;height:22.4px;background:#f0fff0;border-top:2px solid #6e6e6e;border-left:2px solid #6e6e6e;border-right:1px solid #e4e4e4;border-bottom:1px solid #e4e4e4"></div>
<div class="rb on" style="left:698px;top:328px;width:13px;height:13px"></div>
<span class="t" style="left:715.98px;top:327.60px;font:normal bold 12.65px/14px 'Liberation Sans',sans-serif;color:#7a0a14;transform:scaleX(0.8914);">normal</span>
<div class="rb off" style="left:762px;top:328px;width:13px;height:13px"></div>
<span class="t" style="left:780.67px;top:327.80px;font:normal bold 12.65px/14px 'Liberation Sans',sans-serif;color:#7a0a14;transform:scaleX(1.0155);">x 2</span>
<div class="rb off" style="left:806.2px;top:328px;width:13px;height:13px"></div>
<span class="t" style="left:824.87px;top:327.80px;font:normal bold 12.65px/14px 'Liberation Sans',sans-serif;color:#7a0a14;transform:scaleX(1.0044);">x 5</span>
<span class="t" style="left:872.84px;top:327.90px;font:normal bold 12.21px/14px 'Liberation Sans',sans-serif;color:#80007c;transform:scaleX(0.9386);">Form opacity</span>
<span class="t" style="left:659.14px;top:352.70px;font:normal bold 12.5px/14px 'Liberation Sans',sans-serif;color:#7a0a14;transform:scaleX(0.9623);">Scroll range x1.25</span>
<div class="cb off" style="left:770px;top:353px;width:13px;height:13px"></div>
<div style="left:852.2px;top:346.2px;width:114.8px;height:20.3px;background:#fffacd"></div>
<div style="left:858px;top:352.3px;width:99px;height:3.5px;background:#e7e7e7;border:1px solid #d0d0d0"></div>
<svg style="left:852px;top:346px" width="115" height="21" viewBox="852 346 115 21"><g fill="#a8a8a8"><rect x="862.00" y="363" width="1" height="3.500"/><rect x="880.75" y="363" width="1" height="3.500"/><rect x="899.50" y="363" width="1" height="3.500"/><rect x="918.25" y="363" width="1" height="3.500"/><rect x="937.00" y="363" width="1" height="3.500"/><rect x="955.75" y="363" width="1" height="3.500"/></g><path d="M951.800 349.100a1 1 0 0 1 1 -1h6.200a1 1 0 0 1 1 1v7.400l-4.100 4.100l-4.100 -4.100z" fill="#0669cc"/></svg>
<span class="t" style="left:643.31px;top:381.90px;font:normal normal 12.06px/14px 'Liberation Sans',sans-serif;color:#000;transform:scaleX(0.8942);">RMS fit 0.2 ±0.0 km</span>
<div style="left:636px;top:402px;width:328px;height:242px;background:#fff;border-top:2px solid #6e6e6e;border-left:2px solid #6e6e6e;border-right:1px solid #fff;border-bottom:1px solid #fff"></div>
<div style="left:638px;top:626px;width:325px;height:17px;background:#f0f0f0"></div>
<div style="left:655px;top:633px;width:196.5px;height:2px;background:#858585;border-radius:1px"></div>
<div style="left:643px;top:409.8px;width:66px;height:2.1px;background:#4b0f8c"></div>
<svg style="left:640px;top:419px" width="72" height="9" viewBox="640 419 72 9"><circle cx="645.0" cy="423.400" r="1.200" fill="#fff" stroke="#111" stroke-width=".9"/><circle cx="660.1" cy="423.400" r="1.200" fill="#fff" stroke="#111" stroke-width=".9"/><circle cx="675.2" cy="423.400" r="1.200" fill="#fff" stroke="#111" stroke-width=".9"/><circle cx="690.3" cy="423.400" r="1.200" fill="#fff" stroke="#111" stroke-width=".9"/><circle cx="705.4" cy="423.400" r="1.200" fill="#fff" stroke="#111" stroke-width=".9"/></svg>
<span class="t" style="left:731.48px;top:405.70px;font:normal normal 11.84px/14px 'Liberation Mono',monospace;color:#000;transform:scaleX(1.1620);">1    Hiroyuki Tomioka, near</span>
<span class="t" style="left:731.55px;top:417.90px;font:normal normal 11.84px/14px 'Liberation Mono',monospace;color:#000;transform:scaleX(1.1688);">2(P) Predicted</span>
</body></html>
